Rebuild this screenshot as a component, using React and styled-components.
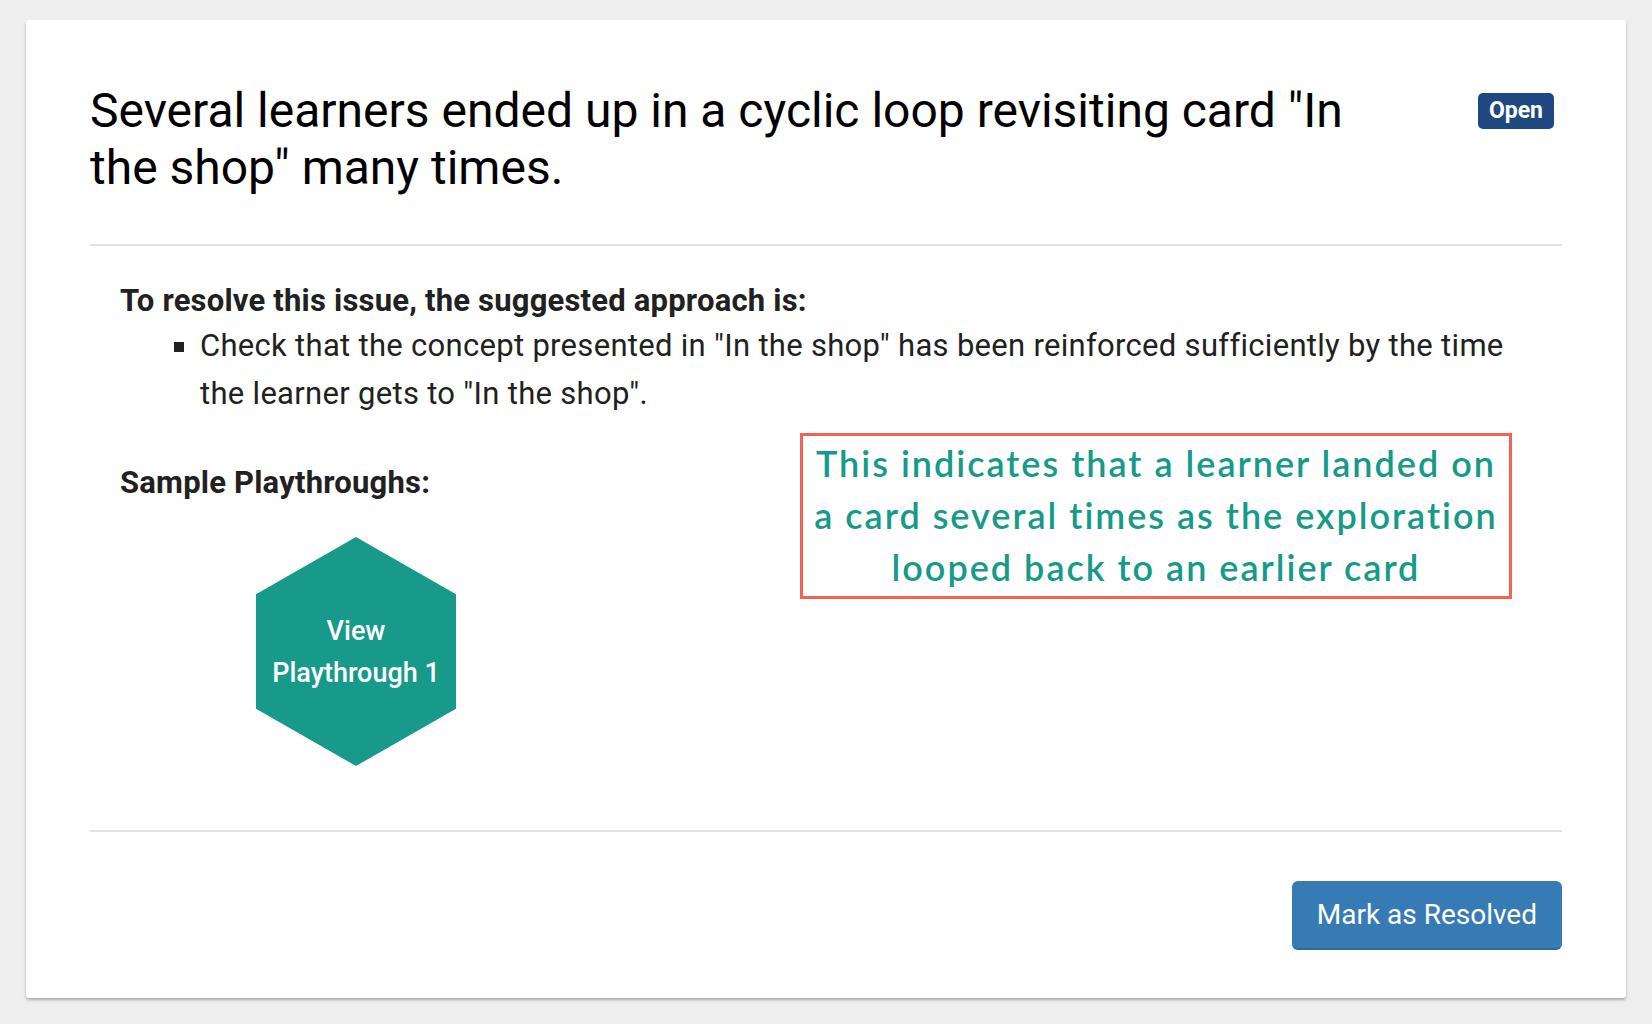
import styled, { createGlobalStyle } from 'styled-components';

const GlobalStyle = createGlobalStyle`
  html, body {
    margin: 0;
    padding: 0;
    background: #eeeeee;
    font-family: Roboto, "Liberation Sans", sans-serif;
    color: #212121;
  }
`;

const Page = styled.div`
  padding: 20px 26px 26px;
`;

const Card = styled.div`
  background: #fff;
  border-radius: 3px;
  box-shadow: 0 2px 3px rgba(0, 0, 0, 0.28);
  padding: 62px 64px 48px;
`;

const Header = styled.div`
  display: flex;
  justify-content: space-between;
  align-items: flex-start;
  padding-right: 8px;
`;

const Title = styled.h1`
  margin: 0;
  font-size: 48px;
  line-height: 57px;
  font-weight: 400;
  color: #000;
  max-width: 1290px;
`;

const Badge = styled.span`
  margin-top: 11px;
  background: #1e487f;
  color: #fff;
  font-size: 23px;
  font-weight: 700;
  line-height: 36px;
  padding: 0 11px;
  border-radius: 5px;
`;

const Divider = styled.hr`
  border: 0;
  border-top: 2px solid #e3e3e3;
  margin: ${(p) => p.$top}px 0 0;
`;

const Body = styled.div`
  position: relative;
  padding: 0 30px;
`;

const Heading = styled.h3`
  margin: ${(p) => p.$top}px 0 0;
  font-size: 31px;
  line-height: 39px;
  font-weight: 700;
  letter-spacing: 0.2px;
  color: #212121;
`;

const List = styled.ul`
  margin: 2px 0 0;
  padding-left: 80px;
  list-style: square;
  font-size: 31px;
  line-height: 48px;
  letter-spacing: 0.3px;
  color: #212121;
`;

const Hexagon = styled.button`
  margin: 35px 0 0 136px;
  width: 200px;
  height: 229px;
  border: 0;
  background: #179a89;
  clip-path: polygon(50% 0, 100% 25%, 100% 75%, 50% 100%, 0 75%, 0 25%);
  color: #fff;
  font-family: Roboto, "Liberation Sans", sans-serif;
  font-size: 27px;
  font-weight: 500;
  line-height: 42px;
  cursor: pointer;
  display: flex;
  align-items: center;
  justify-content: center;
  text-align: center;
  padding: 0;
`;

const Callout = styled.div`
  position: absolute;
  left: 710px;
  top: 152px;
  width: 706px;
  border: 3px solid #f26256;
  color: #179a89;
  font-family: Lato, "Open Sans", sans-serif;
  font-weight: 600;
  font-size: 36px;
  line-height: 52px;
  letter-spacing: 2px;
  text-align: center;
  padding: 1px 0 3px;
`;

const Footer = styled.div`
  display: flex;
  justify-content: flex-end;
  margin-top: 49px;
`;

const ResolveButton = styled.button`
  background: #377bb5;
  color: #fff;
  border: 0;
  border-bottom: 2px solid #2f6a9d;
  border-radius: 6px;
  font-family: Roboto, "Liberation Sans", sans-serif;
  font-size: 28px;
  height: 69px;
  padding: 0 25px;
  cursor: pointer;
`;

export default function App() {
  return (
    <>
      <GlobalStyle />
      <Page>
        <Card>
          <Header>
            <Title>
              Several learners ended up in a cyclic loop revisiting card "In the shop" many times.
            </Title>
            <Badge>Open</Badge>
          </Header>
          <Divider $top={48} />
          <Body>
            <Heading $top={35}>To resolve this issue, the suggested approach is:</Heading>
            <List>
              <li>
                Check that the concept presented in "In the shop" has been reinforced sufficiently by
                the time the learner gets to "In the shop".
              </li>
            </List>
            <Heading $top={45}>Sample Playthroughs:</Heading>
            <Hexagon>
              View
              <br />
              Playthrough 1
            </Hexagon>
            <Callout>
              This indicates that a learner landed on a card several times as the exploration
              looped back to an earlier card
            </Callout>
          </Body>
          <Divider $top={64} />
          <Footer>
            <ResolveButton>Mark as Resolved</ResolveButton>
          </Footer>
        </Card>
      </Page>
    </>
  );
}
